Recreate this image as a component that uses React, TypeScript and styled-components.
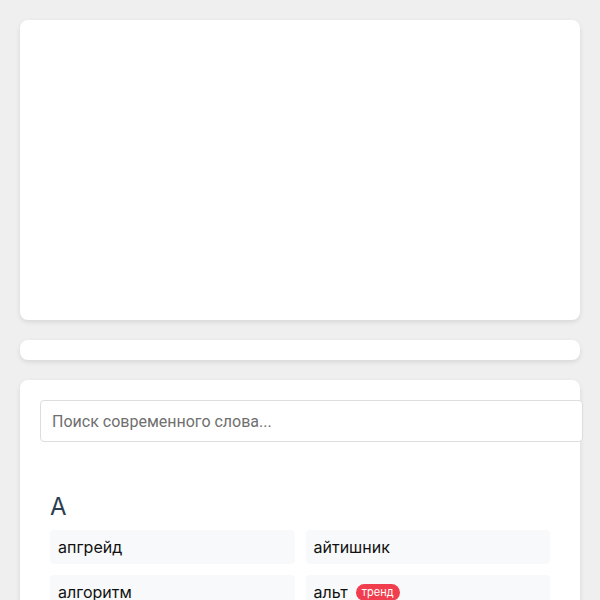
import React from "react";
import styled, { createGlobalStyle } from "styled-components";

const GlobalStyle = createGlobalStyle`
  html, body {
    margin: 0;
    padding: 0;
    background: #efefef;
    font-family: Roboto, "Noto Sans", sans-serif;
  }
`;

interface Word {
  text: string;
  trend?: boolean;
}

const groups: { letter: string; words: Word[] }[] = [
  {
    letter: "А",
    words: [
      { text: "апгрейд" },
      { text: "айтишник" },
      { text: "алгоритм" },
      { text: "альт", trend: true },
    ],
  },
];

const App = () => {
  return (
    <>
      <GlobalStyle />
      <Page>
        <Card $height={300} />
        <Card $height={20} />
        <Card>
          <SearchInput type="text" placeholder="Поиск современного слова..." />
          <Dictionary>
            {groups.map((g) => (
              <Group key={g.letter}>
                <Letter>{g.letter}</Letter>
                <WordGrid>
                  {g.words.map((w) => (
                    <WordItem key={w.text}>
                      {w.text}
                      {w.trend && <Badge>тренд</Badge>}
                    </WordItem>
                  ))}
                </WordGrid>
              </Group>
            ))}
          </Dictionary>
        </Card>
      </Page>
    </>
  );
};

const Page = styled.div`
  display: flex;
  flex-direction: column;
  gap: 20px;
  padding: 20px;
`;

// fixed-height cards are empty placeholders, the last one holds the dictionary
const Card = styled.div<{ $height?: number }>`
  background: #fff;
  border-radius: 8px;
  box-shadow: 0 2px 5px rgba(0, 0, 0, 0.1);
  padding: ${(p) => (p.$height !== undefined ? "0" : "20px")};
  height: ${(p) => (p.$height !== undefined ? `${p.$height}px` : "auto")};
  min-height: ${(p) => (p.$height !== undefined ? "0" : "300px")};
`;

// content-box on purpose: the field sticks out past the card edge a bit
const SearchInput = styled.input`
  display: block;
  box-sizing: content-box;
  width: calc(100% - 1px);
  height: 40px;
  padding: 0 11px;
  border: 1px solid #ddd;
  border-radius: 4px;
  font-family: Roboto, sans-serif;
  font-size: 16px;
  color: #333;
  &::placeholder {
    color: #6f6f6f;
  }
`;

const Dictionary = styled.div`
  padding: 50px 10px 0;
`;

const Group = styled.div`
  display: flex;
  flex-direction: column;
`;

const Letter = styled.h2`
  margin: 0 0 8px;
  font-family: Inter, sans-serif;
  font-weight: 400;
  font-size: 24px;
  line-height: 30px;
  color: #2c3e50;
`;

const WordGrid = styled.div`
  display: grid;
  grid-template-columns: 1fr 1fr;
  gap: 11px;
`;

const WordItem = styled.div`
  display: flex;
  align-items: center;
  gap: 8px;
  height: 34px;
  padding: 0 8px;
  background: #f8f9fa;
  border-radius: 4px;
  font-family: Inter, sans-serif;
  font-size: 16px;
  color: #111;
`;

const Badge = styled.span`
  background: #f03e4e;
  color: #fff;
  font-family: Inter, sans-serif;
  font-size: 11px;
  line-height: 17px;
  padding: 0 6px;
  border-radius: 9px;
`;

export default App;
